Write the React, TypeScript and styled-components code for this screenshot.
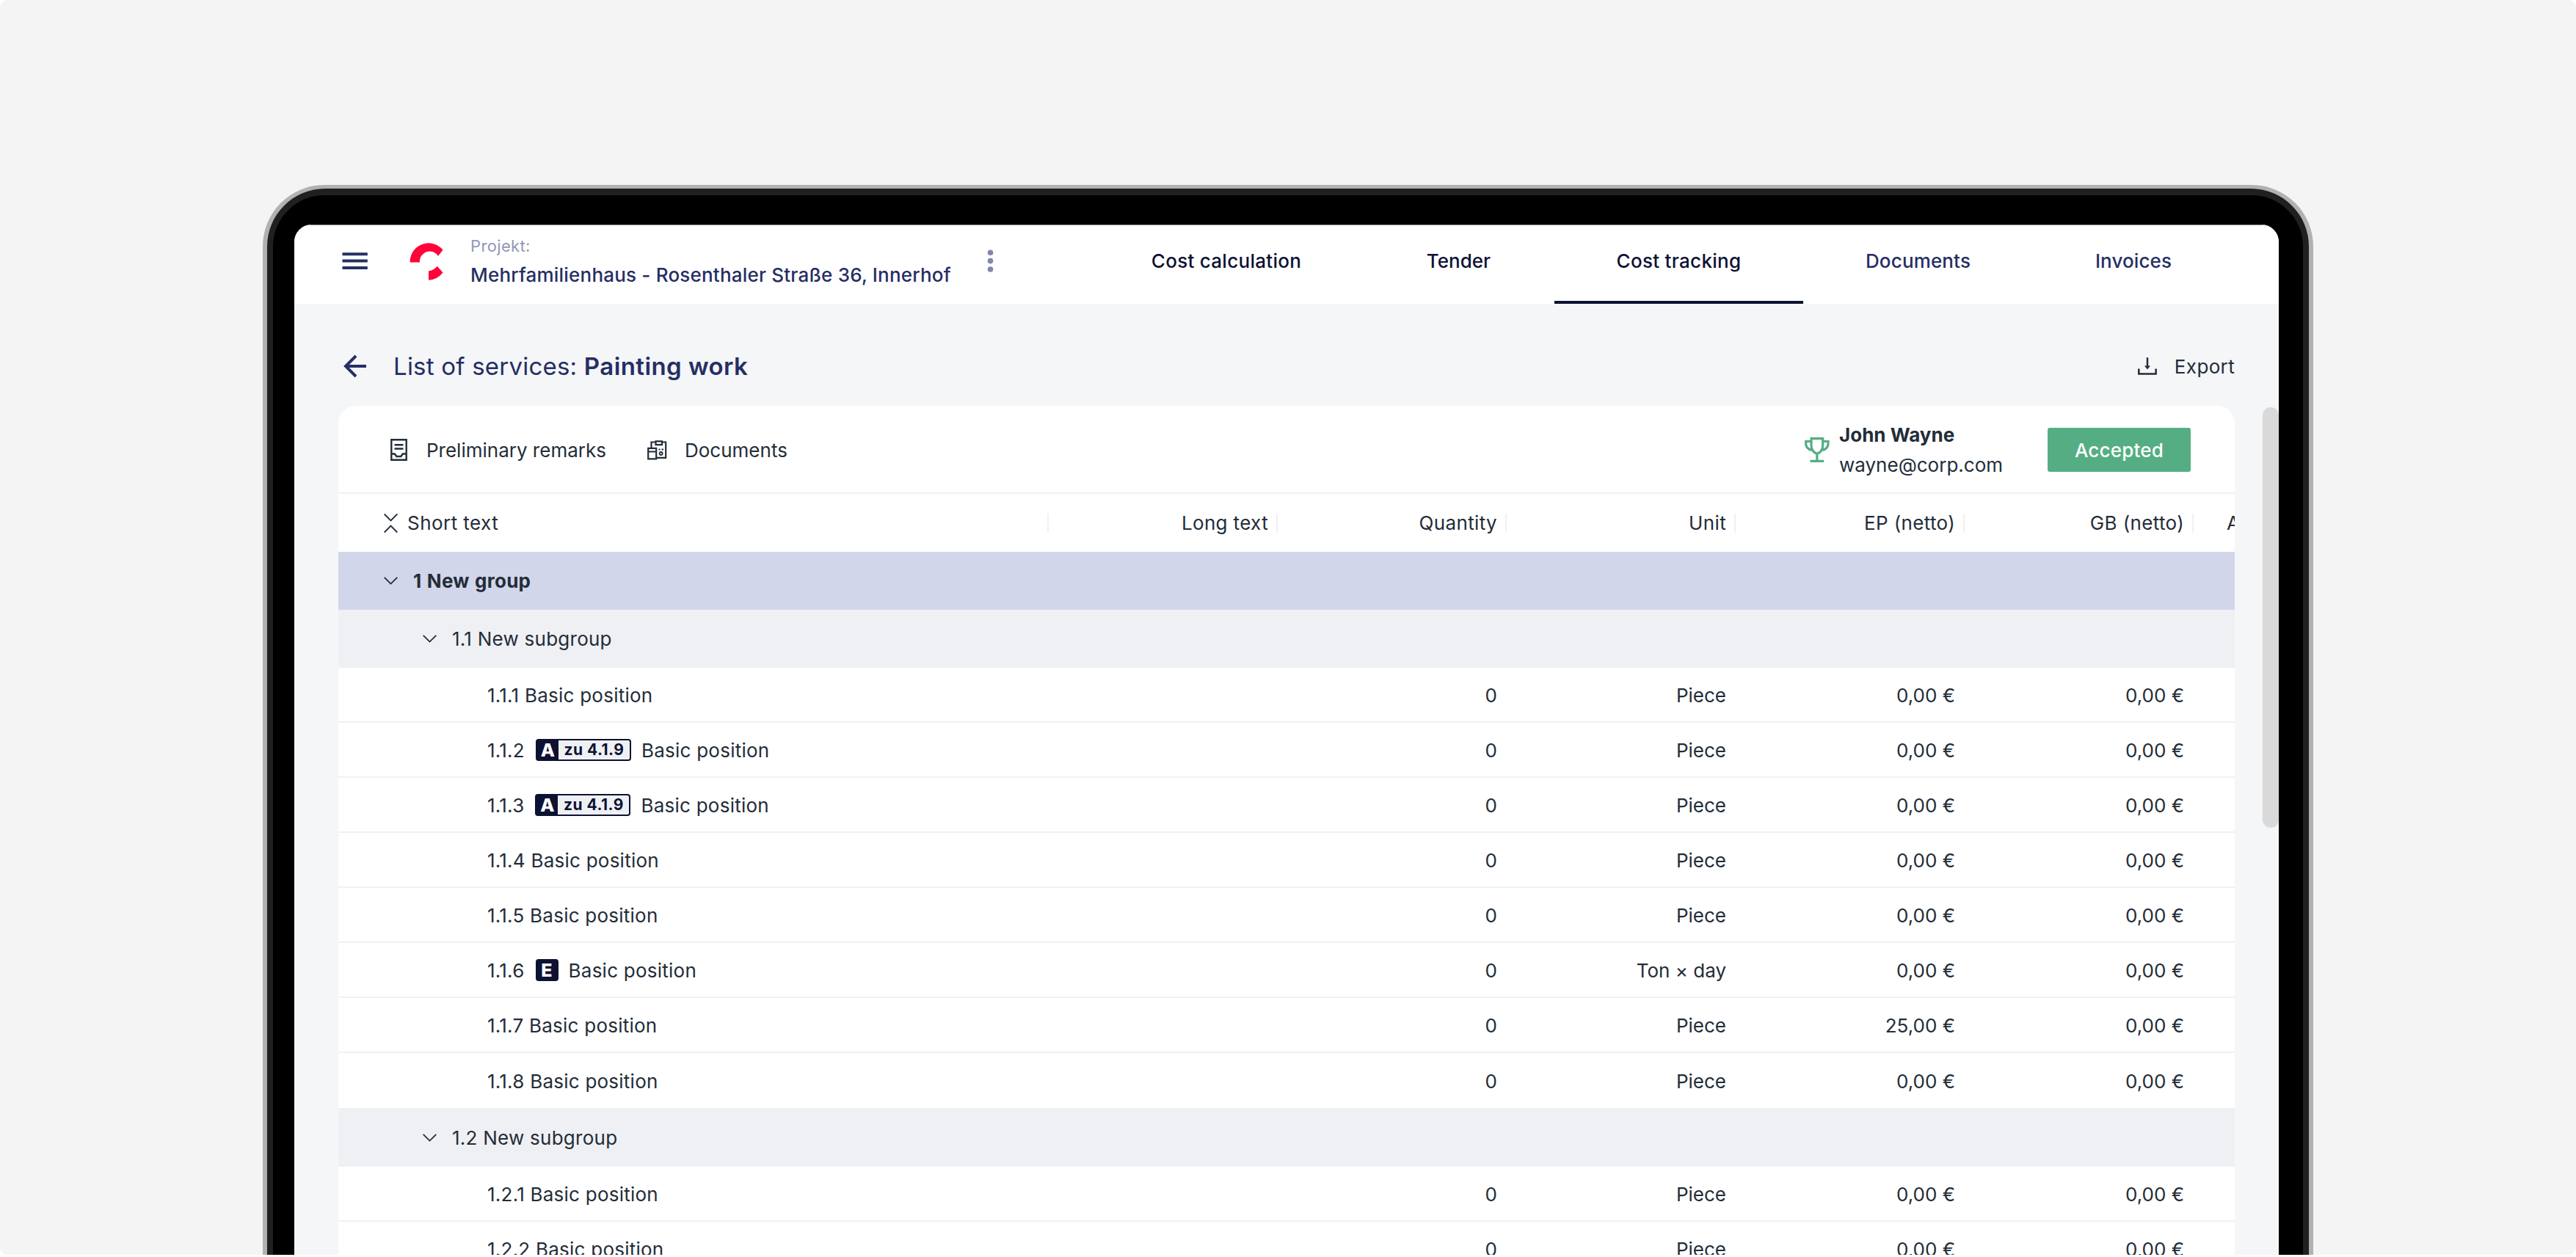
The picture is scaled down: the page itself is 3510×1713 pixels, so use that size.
import React from "react";
import styled, { createGlobalStyle, css } from "styled-components";

const GlobalStyle = createGlobalStyle`
  * { box-sizing: border-box; }
  html, body { margin: 0; padding: 0; background: #ffffff; }
  body { font-family: Inter, "Liberation Sans", sans-serif; font-optical-sizing: none; font-size: 26px; color: #232d38; overflow: hidden; }
`;

const Stage = styled.div`
  width: 3510px;
  height: 1710px;
  background: #f4f4f4;
  border-radius: 10px;
  overflow: hidden;
  padding: 252px 358px 0;
`;
const Shell = styled.div`
  width: 2794px;
  height: 1600px;
  border-radius: 84px 84px 0 0;
  background: #b0b2b1;
  padding: 5px 6px 0;
`;
const Rim = styled.div`
  height: 100%;
  border-radius: 79px 79px 0 0;
  background: #202020;
  padding: 9px 8px 0 8px;
`;
const Bezel = styled.div`
  height: 100%;
  border-radius: 70px 70px 0 0;
  background: #000;
  padding: 40px 33px 0 29px;
`;
const Screen = styled.div`
  height: 100%;
  border-radius: 24px 24px 0 0;
  background: #f4f6f8;
  overflow: hidden;
  display: flex;
  flex-direction: column;
`;
const TopBar = styled.header`
  height: 108px;
  flex: none;
  background: #fff;
  border-top: 1px solid #8a8a8a;
  display: flex;
  align-items: stretch;
`;
const MenuIcon = styled.svg`
  width: 36px;
  height: 36px;
  margin: 30px 0 0 65px;
  flex: none;
`;
const Logo = styled.svg`
  width: 46px;
  height: 52px;
  margin: 24px 0 0 56px;
  flex: none;
`;
const Project = styled.div`
  width: 691px;
  margin-left: 37px;
  padding-top: 11px;
  flex: none;
`;
const ProjectLabel = styled.div`
  font-size: 22px;
  line-height: 34px;
  letter-spacing: 0.35px;
  color: #9297b8;
`;
const ProjectName = styled.div`
  font-size: 26px;
  line-height: 46px;
  letter-spacing: 0.2px;
  font-weight: 500;
  color: #262e63;
  white-space: nowrap;
`;
const Dots = styled.svg`
  width: 10px;
  height: 32px;
  margin: 33px 0 0 12px;
  flex: none;
`;
const Tabs = styled.nav`
  display: flex;
  margin-left: 131px;
`;
const Tab = styled.a<{ $width: number; $active?: boolean; $light?: boolean; $track?: number }>`
  width: ${(p) => p.$width}px;
  height: 107px;
  padding-top: 32px;
  line-height: 34px;
  letter-spacing: ${(p) => p.$track ?? 0}px;
  text-align: center;
  white-space: nowrap;
  font-weight: 500;
  color: ${(p) => (p.$light ? "#262e63" : "#0d1233")};
  border-bottom: 4px solid ${(p) => (p.$active ? "#0d1233" : "transparent")};
`;
const TitleBar = styled.div`
  height: 139px;
  flex: none;
  padding: 32px 60px 0 66px;
  display: flex;
  align-items: flex-start;
`;
const BackIcon = styled.svg`
  width: 34px;
  height: 34px;
  margin-top: 36px;
`;
const Title = styled.h1`
  margin: 30px 0 0 35px;
  font-size: 33px;
  line-height: 46px;
  letter-spacing: 0.22px;
  font-weight: 400;
  color: #262e63;
  flex: 1;
  b { font-weight: 600; letter-spacing: 0.43px; }
`;
const Export = styled.div`
  display: flex;
  align-items: center;
  gap: 24px;
  margin-top: 33px;
  height: 40px;
  letter-spacing: 0.35px;
  svg { width: 26px; height: 24px; }
`;
const Body = styled.div`
  display: flex;
  flex: 1;
  padding-left: 60px;
  min-height: 0;
`;
const Card = styled.section`
  width: 2584px;
  background: #fff;
  border-radius: 24px 24px 0 0;
  overflow: hidden;
`;
const Scroll = styled.div`
  width: 22px;
  height: 573px;
  margin: 2px 0 0 38px;
  border-radius: 11px;
  background: #d9d9d9;
`;
const Toolbar = styled.div`
  height: 120px;
  border-bottom: 2px solid #f1f1f2;
  display: flex;
  align-items: center;
  padding: 2px 60px 0 71px;
`;
const Tool = styled.div<{ $width: number }>`
  width: ${(p) => p.$width}px;
  display: flex;
  align-items: center;
`;
const ToolIcon = styled.svg<{ $w: number; $h: number; $gap: number }>`
  width: ${(p) => p.$w}px;
  height: ${(p) => p.$h}px;
  margin-right: ${(p) => p.$gap}px;
`;
const Trophy = styled.svg`
  width: 34px;
  height: 34px;
  margin-left: auto;
`;
const Contact = styled.div`
  margin-left: 13px;
  width: 284px;
  line-height: 41px;
  b { font-weight: 700; }
`;
const Badge = styled.div`
  width: 195px;
  height: 60px;
  border-radius: 3px;
  background: #55ae83;
  color: #fff;
  font-weight: 500;
  letter-spacing: 0.2px;
  display: flex;
  align-items: center;
  justify-content: center;
`;
const gridRow = css`
  display: grid;
  grid-template-columns: 968px 312px 312px 312px 312px 312px 200px;
  width: 2728px;
  align-items: center;
`;
const HeadRow = styled.div`
  ${gridRow}
  height: 79px;
  letter-spacing: 0.35px;
`;
const HeadFirst = styled.div`
  display: flex;
  align-items: center;
  gap: 13px;
  height: 26px;
  padding-left: 62px;
  letter-spacing: 0.45px;
  border-right: 2px solid #f1f1f2;
  svg { width: 19px; height: 28px; }
`;
const HeadCell = styled.div<{ $bare?: boolean }>`
  height: 26px;
  line-height: 26px;
  text-align: ${(p) => (p.$bare ? "left" : "right")};
  padding: ${(p) => (p.$bare ? "0 0 0 45px" : "0 11px 0 0")};
  border-right: 2px solid ${(p) => (p.$bare ? "transparent" : "#f1f1f2")};
`;
const GroupRow = styled.div<{ $level: number; $height: number }>`
  height: ${(p) => p.$height}px;
  display: flex;
  align-items: center;
  gap: 21px;
  padding-left: ${(p) => (p.$level === 0 ? 62 : 115)}px;
  background: ${(p) => (p.$level === 0 ? "#d2d6ea" : "#eff0f4")};
  font-weight: ${(p) => (p.$level === 0 ? 700 : 400)};
  letter-spacing: 0.25px;
  word-spacing: ${(p) => (p.$level === 0 ? 1 : 0)}px;
  svg { width: 19px; height: 11px; }
`;
const Row = styled.div<{ $last?: boolean }>`
  ${gridRow}
  height: 75px;
  padding-top: 1px;
  border-bottom: ${(p) => (p.$last ? "0" : "2px")} solid #f1f1f2;
`;
const Name = styled.div`
  display: flex;
  align-items: center;
  padding-left: 203px;
  letter-spacing: 0.24px;
  white-space: nowrap;
`;
const Value = styled.div`
  text-align: right;
  padding-right: 13px;
`;
const Tag = styled.span`
  height: 30px;
  margin: 0 14px 0 15px;
  border: 2px solid #0d1233;
  border-radius: 4px;
  background: #eff0f4;
  color: #0d1233;
  display: flex;
  align-items: stretch;
  font-size: 21px;
  font-weight: 700;
  line-height: 26px;
`;
const TagLetter = styled.span<{ $solo: boolean }>`
  width: ${(p) => (p.$solo ? 27 : 29)}px;
  background: #0d1233;
  color: #fff;
  font-size: 25px;
  font-weight: 800;
  text-align: center;
`;
const TagText = styled.span`
  width: 97px;
  letter-spacing: 0.45px;
  text-align: center;
`;

const Chevron = () => (
  <svg viewBox="0 0 19 11" fill="none" stroke="#232d38" strokeWidth="1.8">
    <path d="M0.7 0.9 9.5 9.6 18.3 0.9" />
  </svg>
);

type Item = { no: string; tag?: string; ref?: string; unit?: string; price?: string };

const first: Item[] = [
  { no: "1.1.1" },
  { no: "1.1.2", tag: "A", ref: "zu 4.1.9" },
  { no: "1.1.3", tag: "A", ref: "zu 4.1.9" },
  { no: "1.1.4" },
  { no: "1.1.5" },
  { no: "1.1.6", tag: "E", unit: "Ton × day" },
  { no: "1.1.7", price: "25,00 €" },
  { no: "1.1.8" },
];
const second: Item[] = [{ no: "1.2.1" }, { no: "1.2.2" }];

const Position = ({ item, last }: { item: Item; last?: boolean }) => (
  <Row $last={last}>
    <Name>
      {item.tag ? (
        <>
          <span>{item.no}</span>
          <Tag>
            <TagLetter $solo={!item.ref}>{item.tag}</TagLetter>
            {item.ref && <TagText>{item.ref}</TagText>}
          </Tag>
          <span>Basic position</span>
        </>
      ) : (
        <span>{`${item.no} Basic position`}</span>
      )}
    </Name>
    <div />
    <Value>0</Value>
    <Value>{item.unit ?? "Piece"}</Value>
    <Value>{item.price ?? "0,00 €"}</Value>
    <Value>0,00 €</Value>
  </Row>
);

export default function App() {
  return (
    <>
      <GlobalStyle />
      <Stage>
        <Shell>
          <Rim>
            <Bezel>
              <Screen>
                <TopBar>
                  <MenuIcon viewBox="0 0 36 36" fill="#253063">
                    <path d="M0.5 7.2h34.3v4H0.5zM0.5 16.5h34.3v4H0.5zM0.5 26h34.3v4H0.5z" />
                  </MenuIcon>
                  <Logo viewBox="0 0 46 52" fill="#ff0339">
                    <path d="M0.7 26.5A25.3 25.3 0 0 1 45.5 9.5L39 18A13.5 13.5 0 0 0 14 26.5Z" />
                    <path d="M26 38.3Q33 37.5 37.7 31.7L45.5 40.5Q37 50.7 26 50.7Z" />
                  </Logo>
                  <Project>
                    <ProjectLabel>Projekt:</ProjectLabel>
                    <ProjectName>Mehrfamilienhaus - Rosenthaler Straße 36, Innerhof</ProjectName>
                  </Project>
                  <Dots viewBox="0 0 10 32" fill="#8286ae">
                    <circle cx="5.5" cy="4.3" r="3.8" />
                    <circle cx="5.5" cy="15.6" r="3.8" />
                    <circle cx="5.5" cy="27" r="3.8" />
                  </Dots>
                  <Tabs>
                    <Tab $width={372} $track={0.28}>Cost calculation</Tab>
                    <Tab $width={261}>Tender</Tab>
                    <Tab $width={339} $track={0.3} $active>Cost tracking</Tab>
                    <Tab $width={313} $track={0.15} $light>Documents</Tab>
                    <Tab $width={274} $track={0.1} $light>Invoices</Tab>
                  </Tabs>
                </TopBar>
                <TitleBar>
                  <BackIcon viewBox="0 0 34 34" fill="none" stroke="#253063" strokeWidth="4">
                    <path d="M32 17H4M18 3 4 17 18 31" />
                  </BackIcon>
                  <Title>
                    List of services: <b>Painting work</b>
                  </Title>
                  <Export>
                    <svg viewBox="0 0 26 24" fill="none" stroke="#232d38" strokeWidth="2.5">
                      <path d="M1.3 15.5v7h23.3v-7M13 0.3v13" />
                      <path d="M9 11.5h8L13 16.5z" fill="#232d38" stroke="none" />
                    </svg>
                    Export
                  </Export>
                </TitleBar>
                <Body>
                  <Card>
                    <Toolbar>
                      <Tool $width={350}>
                        <ToolIcon $w={23} $h={30} $gap={26} viewBox="0 0 23 30" fill="none" stroke="#232d38" strokeWidth="2.4">
                          <path d="M1.3 1.3h20.4v27.4H1.3zM5.5 8.3h12M5.5 13.5h12M1.3 20.500h4.500l2.500 3.500h6l2.500-3.500h4.500" />
                        </ToolIcon>
                        Preliminary remarks
                      </Tool>
                      <Tool $width={300}>
                        <ToolIcon $w={27} $h={27} $gap={24} viewBox="0 0 27 27" fill="none" stroke="#232d38" strokeWidth="2.2">
                          <path d="M5.5 10V2.5h6M20 2.5h5.2v21.300H13M11.500 1.300h8.500v4.800h-8.500zM1.200 10.800h11v14.500h-11zM1.200 15.500h11" />
                          <path d="M15.500 12.500h2M19.500 12.500h2.500" strokeWidth="1.800" />
                          <circle cx="18.700" cy="18" r="2" strokeWidth="1.800" />
                        </ToolIcon>
                        Documents
                      </Tool>
                      <Trophy viewBox="0 0 34 34" fill="none" stroke="#55ae83" strokeWidth="3.2">
                        <path d="M9 1.700h15.700v9c0 6-3.200 10-7.850 11.800C12.200 20.700 9 16.700 9 10.700zM9 5.500H1.700v3.500c0 4.500 3 7.200 7.800 8.500M24.700 5.500H32v3.500c0 4.500-3 7.200-7.800 8.500M16.850 22v10M7.500 32.300h18.700" />
                      </Trophy>
                      <Contact>
                        <b>John Wayne</b>
                        <div>wayne@corp.com</div>
                      </Contact>
                      <Badge>Accepted</Badge>
                    </Toolbar>
                    <HeadRow>
                      <HeadFirst>
                        <svg viewBox="0 0 19 28" fill="none" stroke="#232d38" strokeWidth="1.8">
                          <path d="M0.7 1.5 9.5 10.5 18.3 1.5M0.7 26.5 9.5 17.5 18.3 26.5" />
                        </svg>
                        Short text
                      </HeadFirst>
                      <HeadCell>Long text</HeadCell>
                      <HeadCell>Quantity</HeadCell>
                      <HeadCell>Unit</HeadCell>
                      <HeadCell>EP (netto)</HeadCell>
                      <HeadCell>GB (netto)</HeadCell>
                      <HeadCell $bare>A</HeadCell>
                    </HeadRow>
                    <GroupRow $level={0} $height={79}><Chevron />1 New group</GroupRow>
                    <GroupRow $level={1} $height={79}><Chevron />1.1 New subgroup</GroupRow>
                    {first.map((it, i) => <Position key={it.no} item={it} last={i === 7} />)}
                    <GroupRow $level={1} $height={80}><Chevron />1.2 New subgroup</GroupRow>
                    {second.map((it) => <Position key={it.no} item={it} />)}
                  </Card>
                  <Scroll />
                </Body>
              </Screen>
            </Bezel>
          </Rim>
        </Shell>
      </Stage>
    </>
  );
}
